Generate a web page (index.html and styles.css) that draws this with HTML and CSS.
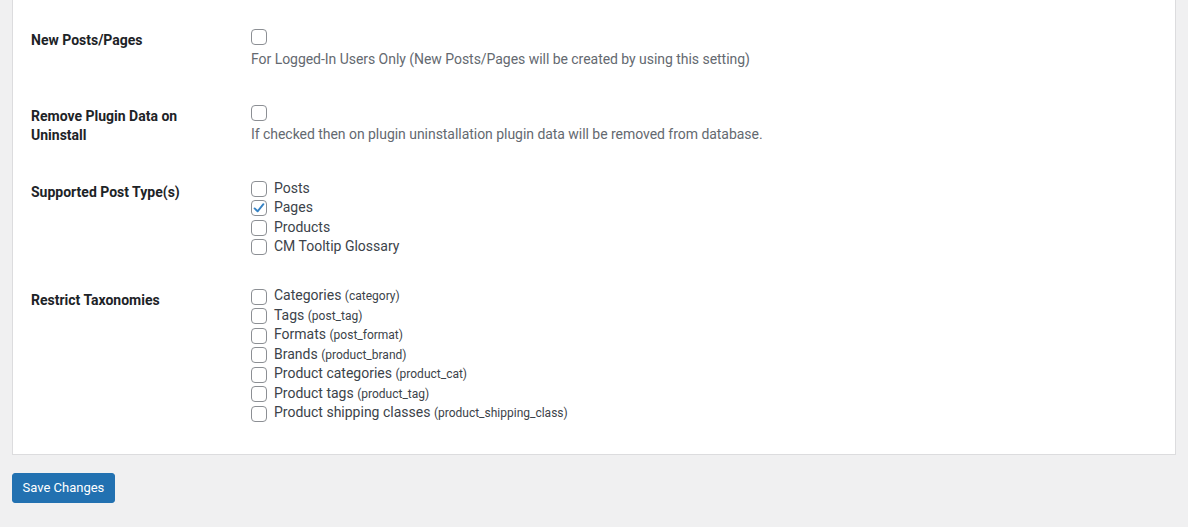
FILE: index.html
```html
<!DOCTYPE html>
<html lang="en">
<head>
<meta charset="utf-8">
<title>Settings</title>
<link rel="stylesheet" href="styles.css">
</head>
<body>
<div class="page">
  <div class="card">
    <div class="row">
      <div class="th">New Posts/Pages</div>
      <div class="td">
        <label class="item"><span class="cb"></span></label>
        <p class="desc">For Logged-In Users Only (New Posts/Pages will be created by using this setting)</p>
      </div>
    </div>
    <div class="row">
      <div class="th">Remove Plugin Data on Uninstall</div>
      <div class="td">
        <label class="item"><span class="cb"></span></label>
        <p class="desc">If checked then on plugin uninstallation plugin data will be removed from database.</p>
      </div>
    </div>
    <div class="row">
      <div class="th">Supported Post Type(s)</div>
      <div class="td">
        <label class="item"><span class="cb"></span><span class="txt">Posts</span></label>
        <label class="item"><span class="cb checked"><svg viewBox="0 0 16 16" width="16" height="16"><path d="M3.6 8.4 L6.6 11.3 L12.4 4.2" fill="none" stroke="#3582c4" stroke-width="1.9" stroke-linecap="round" stroke-linejoin="round"/></svg></span><span class="txt">Pages</span></label>
        <label class="item"><span class="cb"></span><span class="txt">Products</span></label>
        <label class="item"><span class="cb"></span><span class="txt">CM Tooltip Glossary</span></label>
      </div>
    </div>
    <div class="row">
      <div class="th">Restrict Taxonomies</div>
      <div class="td">
        <label class="item"><span class="cb"></span><span class="txt">Categories <small>(category)</small></span></label>
        <label class="item"><span class="cb"></span><span class="txt">Tags <small>(post_tag)</small></span></label>
        <label class="item"><span class="cb"></span><span class="txt">Formats <small>(post_format)</small></span></label>
        <label class="item"><span class="cb"></span><span class="txt">Brands <small>(product_brand)</small></span></label>
        <label class="item"><span class="cb"></span><span class="txt">Product categories <small>(product_cat)</small></span></label>
        <label class="item"><span class="cb"></span><span class="txt">Product tags <small>(product_tag)</small></span></label>
        <label class="item"><span class="cb"></span><span class="txt">Product shipping classes <small>(product_shipping_class)</small></span></label>
      </div>
    </div>
  </div>
  <div class="actions">
    <button class="btn" type="button">Save Changes</button>
  </div>
</div>
</body>
</html>
```
FILE: styles.css
```css
html, body {
  margin: 0;
  padding: 0;
  background: #f0f0f1;
  font-family: Roboto, "Liberation Sans", Arial, sans-serif;
  font-size: 14px;
  color: #3c434a;
}
.page {
  padding: 0 12px 0 12px;
}
.card {
  background: #fff;
  border: 1px solid #dcdcde;
  border-top: none;
  padding: 12.25px 18px 16px;
}
.row {
  display: grid;
  grid-template-columns: 210px 1fr;
  padding: 15px 0 15px;
}
.th {
  width: 200px;
  padding-top: 4px;
  font-weight: 700;
  color: #1d2327;
  line-height: 19px;
}
.td {
  padding-left: 10px;
}
.item {
  display: flex;
  align-items: center;
  height: 19.5px;
}
.cb {
  box-sizing: border-box;
  width: 16px;
  height: 16px;
  border: 1px solid #8c8f94;
  border-radius: 4px;
  background: #fff;
  flex: none;
  position: relative;
}
.cb svg {
  position: absolute;
  left: -1px;
  top: -1px;
}
.txt {
  margin-left: 7px;
  line-height: 19.5px;
  white-space: nowrap;
}
.txt small {
  font-size: 12px;
}
.desc {
  margin: 2.75px 0 4.5px;
  line-height: 19px;
  color: #646970;
  letter-spacing: -0.04px;
}
.actions {
  padding-top: 18px;
}
.btn {
  font-family: Roboto, "Liberation Sans", Arial, sans-serif;
  font-size: 13px;
  background: #2271b1;
  color: #fff;
  border: 1px solid #2271b1;
  border-radius: 3px;
  height: 30px;
  padding: 0 9.5px;
  line-height: 28px;
  cursor: pointer;
}
```
